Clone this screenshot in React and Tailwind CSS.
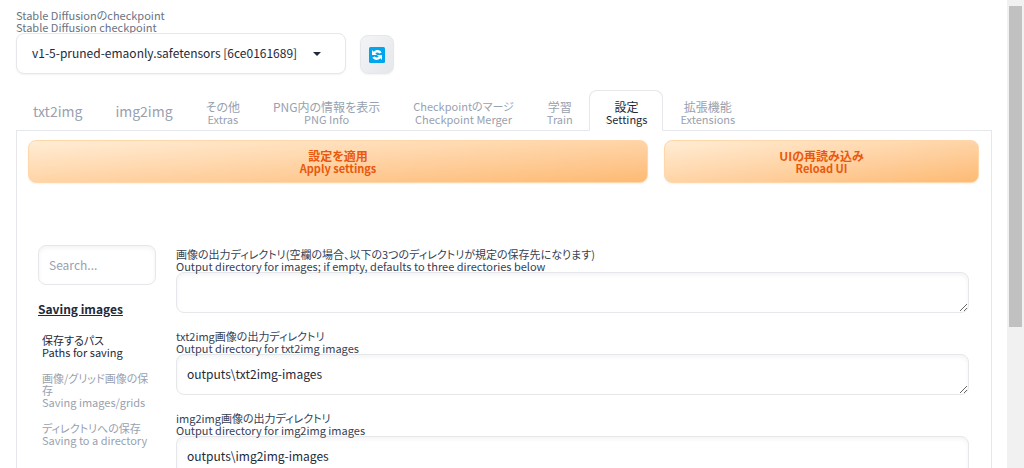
const TABS = [
  { id: 'txt2img', en: 'txt2img' },
  { id: 'img2img', en: 'img2img' },
  { id: 'extras', ja: 'その他', en: 'Extras' },
  { id: 'pnginfo', ja: 'PNG内の情報を表示', en: 'PNG Info' },
  { id: 'merger', ja: 'Checkpointのマージ', en: 'Checkpoint Merger', compact: true },
  { id: 'train', ja: '学習', en: 'Train' },
  { id: 'settings', ja: '設定', en: 'Settings' },
  { id: 'extensions', ja: '拡張機能', en: 'Extensions' },
];

const SECTIONS = [
  { ja: '保存するパス', en: 'Paths for saving' },
  { ja: '画像/グリッド画像の保存', en: 'Saving images/grids' },
  { ja: 'ディレクトリへの保存', en: 'Saving to a directory' },
];

const FIELDS = [
  {
    id: 'outdir_samples',
    ja: '画像の出力ディレクトリ(空欄の場合、以下の3つのディレクトリが規定の保存先になります)',
    en: 'Output directory for images; if empty, defaults to three directories below',
    value: '',
  },
  {
    id: 'outdir_txt2img',
    ja: 'txt2img画像の出力ディレクトリ',
    en: 'Output directory for txt2img images',
    value: 'outputs\\txt2img-images',
  },
  {
    id: 'outdir_img2img',
    ja: 'img2img画像の出力ディレクトリ',
    en: 'Output directory for img2img images',
    value: 'outputs\\img2img-images',
  },
];

// Japanese text on top, the English original below it
function Bilingual({ ja, en, jaClass = '' }) {
  return (
    <>
      {ja && <span className={`block [font-feature-settings:'palt'] ${jaClass}`}>{ja}</span>}
      <span className="block">{en}</span>
    </>
  );
}

function RefreshIcon() {
  return (
    <svg viewBox="0 0 16 16" className="size-4" aria-hidden="true">
      <rect width="16" height="16" rx="1.5" fill="#00a6ed" />
      <path d="M3 3v5h5L6.300 6.300C7.500 5.200 9.300 5.300 10.300 6.500L12.600 5.500C10.900 2.700 7.200 2.300 4.700 4.700Z" fill="#fff" />
      <path d="M13 13V8H8l1.700 1.700C8.500 10.800 6.700 10.700 5.700 9.500L3.400 10.500C5.100 13.300 8.800 13.700 11.300 11.300Z" fill="#fff" />
    </svg>
  );
}

function Checkpoint() {
  return (
    <div className="flex items-end gap-3.5">
      <div className="w-[330px]">
        <label htmlFor="checkpoint" className="block text-[11px] leading-3 text-gray-500">
          <Bilingual ja="Stable Diffusionのcheckpoint" en="Stable Diffusion checkpoint" />
        </label>
        <div className="relative">
          <select
            id="checkpoint"
            className="block h-[41px] w-full appearance-none rounded-lg border border-gray-200 bg-white px-[15px] pb-0.5 text-[12px] text-gray-800 shadow-xs"
          >
            <option>v1-5-pruned-emaonly.safetensors [6ce0161689]</option>
          </select>
          <svg viewBox="0 0 8 4" className="pointer-events-none absolute top-[19px] right-[25px] h-1 w-2" aria-hidden="true">
            <path d="M0 0h8L4 4z" fill="#1f2937" />
          </svg>
        </div>
      </div>
      <button
        type="button"
        aria-label="Refresh checkpoints"
        className="flex h-[39px] w-[34px] items-center justify-center rounded-lg border border-gray-200 bg-linear-to-br from-gray-100 to-gray-200 shadow-xs"
      >
        <RefreshIcon />
      </button>
    </div>
  );
}

function Tab({ ja, en, active, compact }) {
  return (
    <button
      type="button"
      role="tab"
      aria-selected={active}
      className={`-mb-px flex h-[41px] flex-col items-center justify-center rounded-t-lg border pr-[15px] pl-4 whitespace-nowrap ${
        active ? 'border-gray-200 border-b-white bg-white text-gray-800' : 'border-transparent text-gray-400'
      } ${ja ? 'pt-1 text-[11px] leading-[13px]' : 'text-[14px] leading-4'}`}
    >
      <Bilingual ja={ja} en={en} jaClass={compact ? '' : 'text-[12px]'} />
    </button>
  );
}

function PrimaryButton({ ja, en }) {
  return (
    <button
      type="button"
      className="h-[43px] rounded-lg border border-orange-200 bg-linear-to-br from-[#ffedd5] to-[#fdba74] text-[11px] leading-[13px] font-bold text-[#ea580c] shadow-xs"
    >
      <Bilingual ja={ja} en={en} jaClass="text-[12px]" />
    </button>
  );
}

function Field({ id, ja, en, value }) {
  return (
    <div>
      <label htmlFor={id} className="block text-[11px] leading-3 text-gray-700">
        <Bilingual ja={ja} en={en} />
      </label>
      <textarea
        id={id}
        rows={1}
        defaultValue={value}
        className="block h-[41px] w-full rounded-lg border border-gray-200 bg-white px-2.5 py-[7px] text-[12px] leading-6 text-gray-800 inset-shadow-sm"
      />
    </div>
  );
}

function Sidebar() {
  return (
    <nav className="w-[118px] shrink-0">
      <input
        type="text"
        aria-label="Search settings"
        placeholder="Search..."
        className="block h-10 w-full rounded-lg border border-gray-200 px-2.5 pb-0.5 text-[12px] text-gray-800 inset-shadow-sm placeholder:text-gray-400"
      />
      <h2 className="mt-4 text-[12px] leading-4 font-bold text-gray-800 underline">Saving images</h2>
      <div className="mt-[17px] flex flex-col gap-3.5 pl-1">
        {SECTIONS.map((s, i) => (
          <button
            key={s.en}
            type="button"
            className={`text-left text-[11px] leading-3 ${i === 0 ? 'text-gray-800' : 'text-gray-400'}`}
          >
            <Bilingual ja={s.ja} en={s.en} />
          </button>
        ))}
      </div>
    </nav>
  );
}

export default function App() {
  return (
    <div className="flex h-screen overflow-hidden bg-white font-['Noto_Sans_CJK_JP',sans-serif]">
      <main className="flex min-w-0 flex-1 flex-col overflow-hidden pt-[9px] pr-[15px] pl-4">
        <Checkpoint />
        <div role="tablist" className="mt-4 flex border-b border-gray-200">
          {TABS.map((t) => (
            <Tab key={t.id} {...t} active={t.id === 'settings'} />
          ))}
        </div>
        <section className="flex-1 border-x border-gray-200 pt-[9px] pr-3 pl-[11px]">
          <div className="grid grid-cols-[63fr_32fr] gap-4">
            <PrimaryButton ja="設定を適用" en="Apply settings" />
            <PrimaryButton ja="UIの再読み込み" en="Reload UI" />
          </div>
          <div className="mt-[62px] flex gap-5 px-2.5">
            <Sidebar />
            <div className="flex min-w-0 flex-1 flex-col gap-[17px] pt-[3px]">
              {FIELDS.map((f) => (
                <Field key={f.id} {...f} />
              ))}
            </div>
          </div>
        </section>
      </main>
      <div className="w-[17px] shrink-0 bg-[#f1f1f1] px-0.5 pt-1.5" aria-hidden="true">
        <div className="h-[321px] bg-[#c1c1c1]" />
      </div>
    </div>
  );
}
